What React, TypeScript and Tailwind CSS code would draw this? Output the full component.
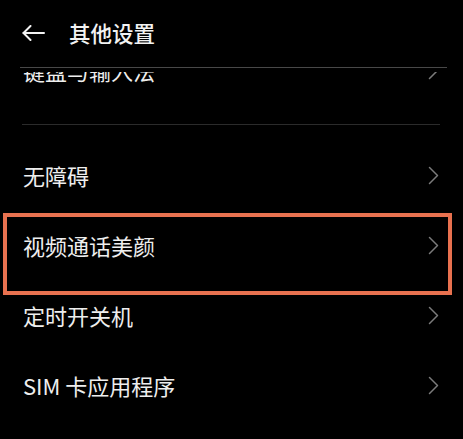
const font = { fontFamily: '"Noto Sans CJK SC", "Noto Sans", sans-serif' };

function Chevron() {
  return (
    <svg width="11" height="19" viewBox="0 0 11 19" fill="none">
      <polyline points="1.5,1.5 9.5,9.5 1.5,17.5" stroke="#7b7b7b" strokeWidth="1.5" strokeLinecap="round" strokeLinejoin="round" />
    </svg>
  );
}

function Row({ label, highlight }: { label: string; highlight?: boolean }) {
  return (
    <div className="relative flex h-[70px] items-center justify-between pl-[23px] pr-[24px]">
      <span className="text-[22px] leading-none text-[#eeeeee]">{label}</span>
      <Chevron />
      {highlight && (
        <div className="absolute left-[3px] right-[11px] top-[3px] bottom-[-15px] border-4 border-[#e8714f]" />
      )}
    </div>
  );
}

export default function App() {
  return (
    <div className="flex h-[439px] w-[463px] flex-col overflow-hidden bg-black" style={font}>
      <header className="ml-[20px] mr-[16px] flex h-[68px] shrink-0 items-center gap-[24px] border-b border-[#484848] pl-[2px] pb-[1px]">
        <svg width="23" height="16" viewBox="0 0 23 16" fill="none">
          <line x1="1.5" y1="8" x2="22" y2="8" stroke="#f2f2f2" strokeWidth="2" strokeLinecap="round" />
          <polyline points="8.5,1 1.5,8 8.5,15" stroke="#f2f2f2" strokeWidth="2" strokeLinecap="round" strokeLinejoin="round" />
        </svg>
        <h1 className="text-[21.5px] font-medium leading-none text-[#f2f2f2]">其他设置</h1>
      </header>
      <div className="mt-[4px] flex-1 overflow-hidden">
        <div className="-mt-[37px]">
          <Row label="键盘与输入法" />
          <div className="pt-[19px] pb-[15px]">
            <div className="ml-[22px] mr-[23px] h-px bg-[#2b2b2b]" />
          </div>
          <Row label="无障碍" />
          <Row label="视频通话美颜" highlight />
          <Row label="定时开关机" />
          <Row label="SIM 卡应用程序" />
        </div>
      </div>
    </div>
  );
}
